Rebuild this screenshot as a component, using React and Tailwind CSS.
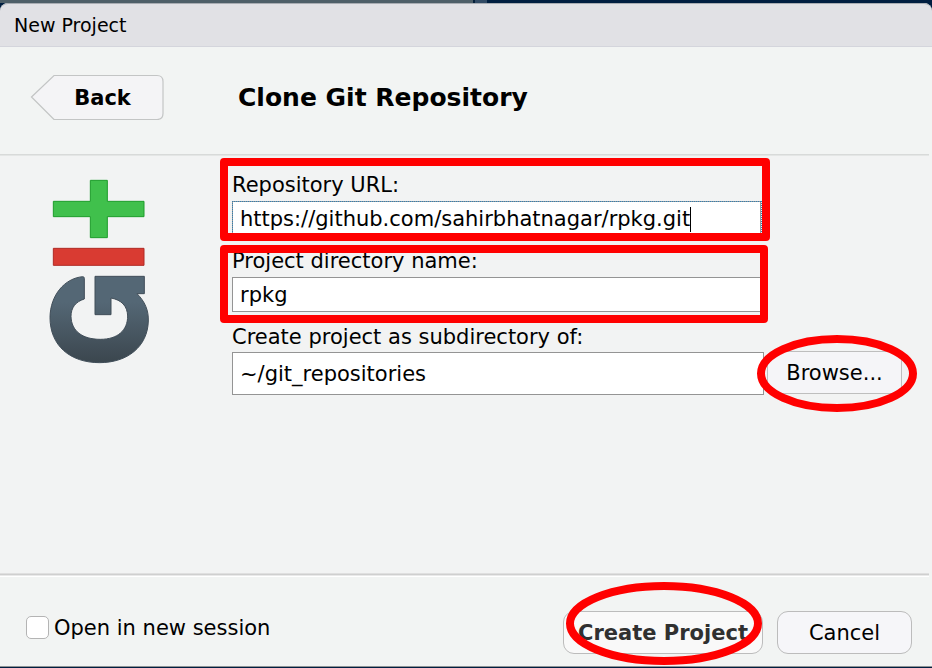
import React from "react";

function TitleBar() {
  return (
    <div className="flex h-11 items-center rounded-t-lg border-t border-b border-t-[#a9adb3] border-b-[#d4d5dc] bg-[#e1e1e5] pl-3.5 text-[19px]">
      New Project
    </div>
  );
}

function BackButton() {
  return (
    <button className="relative ml-[30px] flex h-[46px] w-[134px] items-center justify-center pl-[11px] pt-0.5 text-[21px] font-bold">
      <svg className="absolute inset-0" width="134" height="46" viewBox="0 0 134 46">
        <path
          d="M1.5 23 L24 1.5 H127 Q133 1.5 133 7.5 V39.5 Q133 45.5 127 45.5 H24 Z"
          fill="#f4f4f6"
          stroke="#c3c5c5"
          strokeWidth="1.2"
        />
      </svg>
      <span className="relative">Back</span>
    </button>
  );
}

function GitLogo() {
  return (
    <svg className="ml-12 mt-[22px] block" width="102" height="187" viewBox="54 39 306 561">
      <defs>
        <linearGradient id="slate" x1="0" y1="0" x2="0" y2="1">
          <stop offset="0.3" stopColor="#546775" />
          <stop offset="1" stopColor="#3b464e" />
        </linearGradient>
      </defs>
      <path
        d="M181 46 H232 V109 H342 V155 H232 V218 H181 V155 H70 V109 H181 Z"
        fill="#40c04c"
        stroke="#1d9d2b"
        strokeWidth="3"
      />
      <path d="M70 250 H342 V301 H70 Z" fill="#d93b32" stroke="#b02a25" strokeWidth="3" />
      <path
        d="M195 334 H343 V386 H321 C345 410 356 436 355 468 C353 545 292 593 209 593 C120 593 60 542 60 457 C61 390 104 340 158 335 Q163 335 163 340 V402 C137 410 123 428 123 454 C124 498 157 523 211 523 C263 523 293 496 293 453 C292 423 275 405 243 399 V449 H195 Z"
        fill="url(#slate)"
        stroke="#414e59"
        strokeWidth="3"
      />
    </svg>
  );
}

function Label({ children }) {
  return <label className="block h-6">{children}</label>;
}

function ProjectForm() {
  return (
    <div className="ml-[82px] mt-[17px] w-[680px]">
      <Label>Repository URL:</Label>
      <div className="mt-1 flex h-[35px] w-[530px] border-r border-dotted border-[#2f80b4]">
        <div className="w-[529px] border-l border-t border-dotted border-[#2f80b4] bg-[#999999] pb-px pr-px">
          <div className="flex h-full items-center bg-white pl-[7px] pt-px">
            <span>https://github.com/sahirbhatnagar/rpkg.git</span>
            <span className="h-[25px] w-px bg-black" />
          </div>
        </div>
      </div>
      <div className="mt-[13px]">
        <Label>Project directory name:</Label>
      </div>
      <div className="mt-1 flex h-[35px] w-[532px] items-center border border-[#949494] bg-white pl-[7px] pt-px">
        rpkg
      </div>
      <div className="mt-[13px]">
        <Label>Create project as subdirectory of:</Label>
      </div>
      <div className="mt-0.5 flex items-start gap-[3px]">
        <div className="mt-px flex h-[43px] w-[532px] items-center border border-[#949494] bg-white pl-[7px] pt-px">
          ~/git_repositories
        </div>
        <button className="flex h-[43px] w-[135px] items-center justify-center rounded-md border border-[#bebebe] bg-[#f5f5f8] pt-px">
          Browse...
        </button>
      </div>
    </div>
  );
}

function Footer() {
  return (
    <div className="flex h-[89px] items-start pl-[26px] pr-5 pt-[34px]">
      <label className="flex h-[33px] items-center gap-[5px]">
        <span className="size-[23px] rounded-[5px] border border-[#b4b4b4] bg-white" />
        <span className="pt-px">Open in new session</span>
      </label>
      <button className="ml-auto h-[43px] w-[200px] rounded-[11px] border border-[#bcbcbc] bg-[#f9f9f9] pt-px font-bold text-[#303030]">
        Create Project
      </button>
      <button className="ml-3.5 h-[43px] w-[135px] rounded-[11px] border border-[#bcbcbc] bg-[#f6f6f9] pt-px">
        Cancel
      </button>
    </div>
  );
}

function Annotations() {
  return (
    <svg
      className="pointer-events-none absolute inset-0"
      width="932"
      height="668"
      fill="none"
      stroke="#ff0000"
      strokeWidth="8"
      strokeLinejoin="round"
    >
      <rect x="224" y="162" width="542" height="75" />
      <rect x="224" y="249" width="540" height="70" />
      <ellipse cx="837" cy="373.5" rx="76" ry="34.5" />
      <ellipse cx="664" cy="623.5" rx="94" ry="37.5" />
    </svg>
  );
}

export default function App() {
  return (
    <div className="relative flex h-[668px] w-[932px] flex-col overflow-hidden bg-[#001e40] font-['DejaVu_Sans',sans-serif] text-[21px] leading-6 text-black">
      <div className="flex h-[3px] shrink-0">
        <div className="w-[473px] bg-[#4e5f68]" />
        <div className="w-0.5 bg-[#06203b]" />
        <div className="w-3 bg-[#324b65]" />
      </div>
      <div className="h-[664px] rounded-t-lg bg-[#f2f4f3]">
        <TitleBar />
        <header className="flex h-[107px] items-start">
          <div className="mt-[27px]">
            <BackButton />
          </div>
          <h1 className="ml-[74px] mt-[35px] text-[25px] font-bold leading-8">Clone Git Repository</h1>
        </header>
        <div className="h-0.5 w-[929px] border-b border-[#e4e6e5] bg-[#d8dad9]" />
        <main className="flex h-[417px] items-start bg-[#f2f3f3]">
          <GitLogo />
          <ProjectForm />
        </main>
        <div className="w-[929px] border-b border-white">
          <div className="h-[3px] border-y border-t-[#dfdfdf] border-b-[#e9e9e9] bg-[#cfcfcf]" />
        </div>
        <Footer />
        <div className="h-px bg-[#8f9395]" />
      </div>
      <Annotations />
    </div>
  );
}
